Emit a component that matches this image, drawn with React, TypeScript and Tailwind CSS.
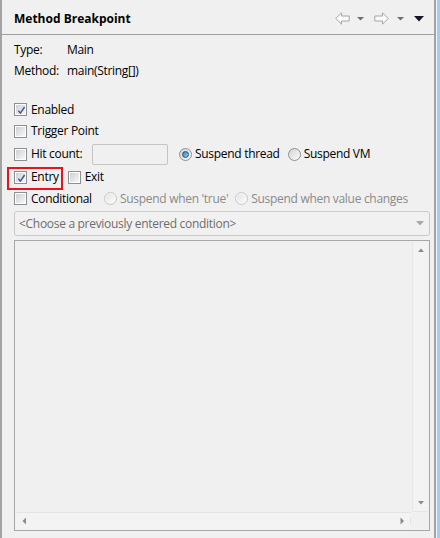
function Check({ checked = false }: { checked?: boolean }) {
  return (
    <span className="relative flex h-[13px] w-[13px] shrink-0 items-center justify-center border border-[#8e8f8f] bg-white">
      <span className="h-[9px] w-[9px] bg-gradient-to-br from-[#cdd1d7] to-[#f7f7f7]" />
      {checked && (
        <svg className="absolute left-[1px] top-[1px]" width="11" height="11" viewBox="0 0 11 11">
          <path d="M2.4 5.6 L4.4 8.2 L8.6 2" fill="none" stroke="#3f5a96" strokeWidth="1.5" strokeLinejoin="round" />
        </svg>
      )}
    </span>
  )
}

function Radio({ checked = false, disabled = false }: { checked?: boolean; disabled?: boolean }) {
  return (
    <span
      className={
        disabled
          ? 'flex h-[13px] w-[13px] shrink-0 items-center justify-center rounded-full border border-[#c6c6c6] bg-[#f6f6f6]'
          : 'flex h-[13px] w-[13px] shrink-0 items-center justify-center rounded-full border border-[#8e8f8f] bg-gradient-to-br from-[#d2d4d8] to-[#fcfcfc]'
      }
    >
      {checked && <span className="h-[7px] w-[7px] rounded-full border border-[#1c4c78] bg-gradient-to-br from-[#2b7fc4] to-[#9fd2f3]" />}
      {disabled && <span className="h-[9px] w-[9px] rounded-full bg-gradient-to-br from-[#e4e4e4] to-[#fbfbfb]" />}
    </span>
  )
}

function Arrow({ dir }: { dir: 'left' | 'right' }) {
  return (
    <svg width="15" height="13" viewBox="0 0 15 13" className={dir === 'right' ? '-scale-x-100' : ''}>
      <path d="M0.8 6.5 L6.5 0.8 V4 H14.2 V9 H6.5 V12.2 Z" fill="#fbfbfb" stroke="#a6a6a6" strokeWidth="1" strokeLinejoin="round" />
    </svg>
  )
}

function Tri({ dir, color = '#8a8a8a' }: { dir: 'up' | 'down' | 'left' | 'right'; color?: string }) {
  const d = {
    up: 'M1 5 L4 1.5 L7 5 Z',
    down: 'M1 2 L7 2 L4 5.5 Z',
    left: 'M5 0.5 L5 7.5 L1.5 4 Z',
    right: 'M2.5 0.5 L2.5 7.5 L6 4 Z',
  }[dir]
  return (
    <svg width="8" height="8" viewBox="0 0 8 8">
      <path d={d} fill={color} />
    </svg>
  )
}

export default function App() {
  return (
    <div className="flex h-[538px] w-[440px] bg-[#f0f0f0] font-['Open_Sans',sans-serif] text-[12px] leading-none text-black">
      <div className="w-[2px] shrink-0 bg-[#a3a3a3]" />

      <div className="flex min-w-0 flex-1 flex-col">
        {/* Header */}
        <div className="flex h-[35px] shrink-0 items-center border-b border-[#a0a0a0] pl-[12px] pr-[9px] pt-[3px]">
          <span className="flex-1 text-[12px] font-bold">Method Breakpoint</span>
          <div className="flex items-center">
            <Arrow dir="left" />
            <span className="ml-[7px] mr-[9px] flex"><svg width="8" height="4" viewBox="0 0 8 4"><path d="M0 0 H7 L3.5 3.5 Z" fill="#6e6e6e" /></svg></span>
            <Arrow dir="right" />
            <span className="ml-[8px] mr-[9px] flex"><svg width="8" height="4" viewBox="0 0 8 4"><path d="M0 0 H7 L3.5 3.5 Z" fill="#6e6e6e" /></svg></span>
            <svg width="11" height="6" viewBox="0 0 11 6"><path d="M0 0 H10 L5 5.5 Z" fill="#1b1426" /></svg>
          </div>
        </div>

        {/* Content */}
        <div className="flex flex-1 flex-col pl-[12px] pr-[4px] pt-[5px] tracking-[-0.3px]">
          <div className="flex h-[20px] items-center">
            <span className="w-[53px]">Type:</span>
            <span>Main</span>
          </div>
          <div className="flex h-[21px] items-center">
            <span className="w-[53px]">Method:</span>
            <span>main(String[])</span>
          </div>

          <div className="mt-[18px] flex h-[21px] items-center gap-[4px]">
            <Check checked />
            <span>Enabled</span>
          </div>
          <div className="flex h-[22px] items-center gap-[4px]">
            <Check />
            <span>Trigger Point</span>
          </div>
          <div className="flex h-[24px] items-center">
            <Check />
            <span className="ml-[4px] w-[61px]">Hit count:</span>
            <span className="h-[21px] w-[76px] rounded-[2px] border border-[#c4c4c4] bg-[#f0f0f0]" />
            <span className="ml-[11px]"><Radio checked /></span>
            <span className="ml-[3px]">Suspend thread</span>
            <span className="ml-[8px]"><Radio /></span>
            <span className="ml-[3px]">Suspend VM</span>
          </div>
          <div className="relative flex h-[22px] items-center">
            <div className="pointer-events-none absolute left-[-7px] top-[1px] h-[23px] w-[56px] border-2 border-[#e8141b]" />
            <Check checked />
            <span className="ml-[4px]">Entry</span>
            <span className="ml-[9px]"><Check /></span>
            <span className="ml-[4px]">Exit</span>
          </div>
          <div className="flex h-[21px] items-center">
            <Check />
            <span className="ml-[4px] w-[72px]">Conditional</span>
            <span className="ml-[1px]"><Radio disabled /></span>
            <span className="ml-[3px] text-[#8a8a8a]">Suspend when 'true'</span>
            <span className="ml-[7px]"><Radio disabled /></span>
            <span className="ml-[3px] text-[#8a8a8a]">Suspend when value changes</span>
          </div>

          {/* Combo */}
          <div className="mt-[2px] flex h-[25px] items-center rounded-[3px] border border-[#c9c9c9] bg-[#f1f1f1] pl-[4px] pr-[4px] text-[#6d6d6d]">
            <span className="flex-1">&lt;Choose a previously entered condition&gt;</span>
            <svg width="9" height="5" viewBox="0 0 9 5"><path d="M0 0 H8 L4 4.5 Z" fill="#a8a8a8" /></svg>
          </div>

          {/* Text area */}
          <div className="mt-[4px] flex h-[291px] flex-col border border-[#a8a8a8] bg-[#f0f0f0] p-[1px]">
            <div className="flex flex-1">
              <div className="flex-1" />
              <div className="flex w-[16px] flex-col border-l border-[#e8e8e8] bg-[#f3f3f3]">
                <div className="flex h-[17px] items-center justify-center"><Tri dir="up" /></div>
                <div className="flex-1" />
                <div className="flex h-[17px] items-center justify-center border-b border-[#e4e4e4]"><Tri dir="down" /></div>
              </div>
            </div>
            <div className="flex h-[17px]">
              <div className="flex flex-1 items-center border-t border-[#e4e4e4] bg-[#f3f3f3]">
                <div className="flex w-[17px] items-center justify-center"><Tri dir="left" /></div>
                <div className="flex-1" />
                <div className="flex w-[17px] items-center justify-center border-r border-[#e4e4e4]"><Tri dir="right" /></div>
              </div>
              <div className="w-[17px]" />
            </div>
          </div>
        </div>
      </div>

      <div className="w-[2px] shrink-0 bg-[#a3a3a3]" />
      <div className="w-[1px] shrink-0 bg-[#eef4fa]" />
      <div className="w-[3px] shrink-0 bg-[#abcbea]" />
    </div>
  )
}
